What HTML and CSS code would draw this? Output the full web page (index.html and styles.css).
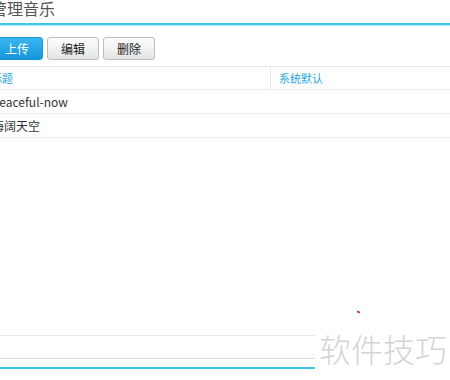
FILE: index.html
```html
<!DOCTYPE html>
<html>

<head>
    <meta charset="UTF-8">
    <title>管理音乐</title>
    <link rel="stylesheet" href="styles.css">
</head>

<body>
    <div class="page">
        <div class="title">管理音乐</div>
        <div class="toolbar">
            <div class="btn primary">上传</div>
            <div class="btn">编辑</div>
            <div class="btn">删除</div>
        </div>
        <div class="list">
            <div class="row head">
                <div class="cell name">标题</div>
                <div class="cell kind">系统默认</div>
            </div>
            <div class="row">
                <div class="cell name">Peaceful-now</div>
                <div class="cell kind"></div>
            </div>
            <div class="row">
                <div class="cell name">海阔天空</div>
                <div class="cell kind"></div>
            </div>
        </div>
        <div class="pager"></div>
        <div class="bottom"></div>
    </div>
    <div class="mark">软件技巧</div>
    <div class="dot"></div>
</body>

</html>
```

FILE: styles.css
```css
body {
    margin: 0;
    background: #ffffff;
    font-family: "Noto Sans CJK SC", sans-serif;
    overflow: hidden;
}

.page {
    margin-left: -9px;
    width: 480px;
}

.title {
    height: 23px;
    font-size: 16px;
    line-height: 17px;
    color: #555555;
    border-bottom: 2px solid #3cc4e6;
    box-shadow: 0 1px 1px #b8eef9;
}

.toolbar {
    display: flex;
    gap: 4px;
    padding-top: 12px;
}

.btn {
    width: 50px;
    height: 21px;
    border: 1px solid #bcbcbc;
    border-radius: 3px;
    background: linear-gradient(#fdfdfd, #e5e5e5);
    color: #1a1a1a;
    font-size: 12px;
    line-height: 21px;
    text-align: center;
}

.btn.primary {
    border-color: #1b92d4;
    background: linear-gradient(#3ab6ef, #1596dc);
    color: #ffffff;
}

.list {
    height: 268px;
    margin-top: 6px;
    border-top: 1px solid #e6e6e6;
}

.row {
    display: flex;
    height: 23px;
    border-bottom: 1px solid #ebebeb;
    font-size: 12px;
    line-height: 23px;
    color: #333333;
}

.row.head {
    height: 22px;
    line-height: 22px;
    font-size: 11px;
    color: #2aa6dc;
}

.cell.name {
    width: 279px;
    padding-left: 1px;
}

.row.head .cell.name {
    padding-left: 0;
    border-right: 1px solid #e8e8e8;
}

.cell.kind {
    padding-left: 8px;
}

.pager {
    height: 22px;
    border-top: 1px solid #ececec;
    border-bottom: 1px solid #dcdce8;
    background: linear-gradient(#ffffff 70%, #fbfdf9);
}

.bottom {
    height: 8px;
    background: #fcfefa;
    border-bottom: 2px solid #3cc4e0;
    box-shadow: 0 1px 1px #b8eef9;
}

.mark {
    position: absolute;
    left: 315px;
    top: 324px;
    width: 135px;
    height: 50px;
    padding-left: 4px;
    background: #ffffff;
    color: #d4d4d4;
    font-size: 32px;
    font-weight: 300;
    line-height: 48px;
    box-sizing: border-box;
}

.dot {
    position: absolute;
    left: 357px;
    top: 311px;
    width: 3px;
    height: 2px;
    background: #c03030;
    transform: rotate(30deg);
}
```
